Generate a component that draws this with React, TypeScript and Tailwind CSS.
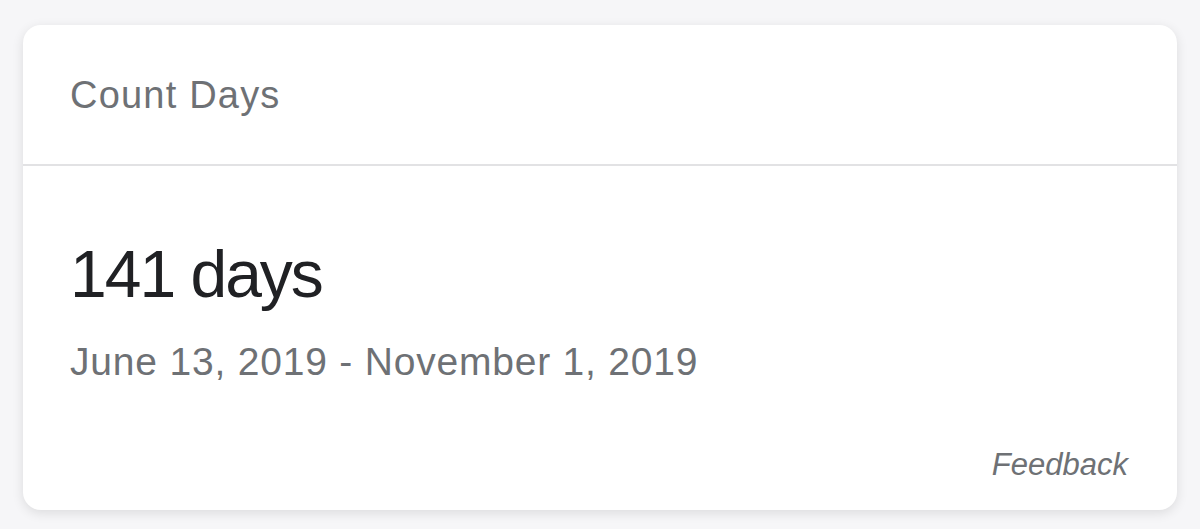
import React from "react";

const font = { fontFamily: '"Liberation Sans", Arial, sans-serif' };

const App: React.FC = () => {
  return (
    <div className="w-[1200px] h-[529px] bg-[#f6f6f8] pt-[25px] px-[23px] overflow-hidden" style={font}>
      <div className="bg-white rounded-[18px] shadow-[0_3px_12px_rgba(0,0,0,0.11)] h-[485px] flex flex-col overflow-hidden">
        {/* header */}
        <div className="h-[141px] shrink-0 pt-[51px] pl-[47px] border-b-2 border-[#e2e2e4]">
          <div className="text-[38px] leading-[38px] tracking-[1.2px] text-[#6e7175]">Count Days</div>
        </div>

        {/* body */}
        <div className="flex-1 flex flex-col pt-[75px] px-[47px]">
          <div className="text-[66px] leading-[66px] tracking-[-2px] text-[#202124]">141 days</div>
          <div className="mt-[35px] text-[39px] leading-[39px] tracking-[0.8px] text-[#6e7175]">
            June 13, 2019 - November 1, 2019
          </div>
          <div className="mt-[68px] flex justify-end pr-[2px]">
            <span className="text-[31px] leading-[31px] italic text-[#6e7175]">Feedback</span>
          </div>
        </div>
      </div>
    </div>
  );
};

export default App;
